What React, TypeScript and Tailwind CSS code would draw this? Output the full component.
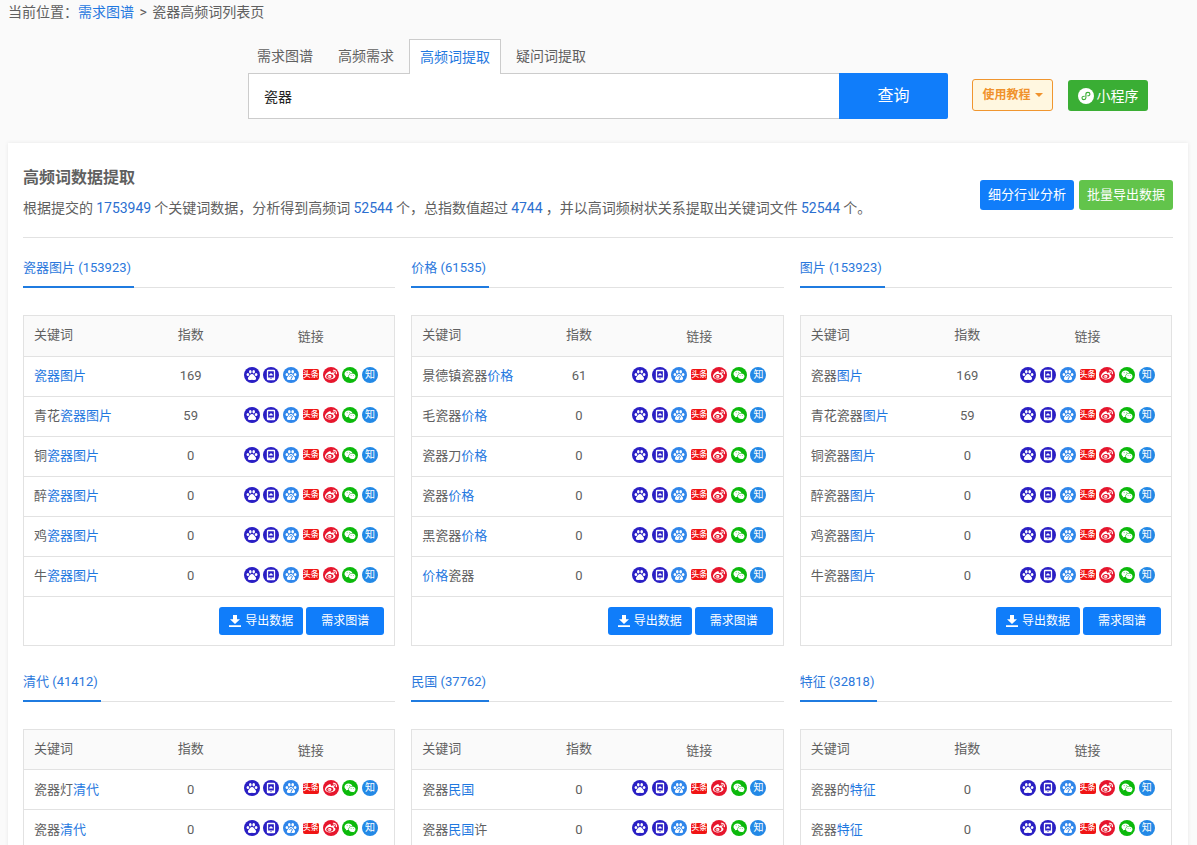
import { FaWeibo } from "react-icons/fa";
import { RiWechatFill } from "react-icons/ri";

type Keyword = { parts: [string, boolean][]; index: number };
type Group = { name: string; count: number; rows: Keyword[]; actions?: boolean };

const parse = (text: string, index: number): Keyword => ({
  parts: text
    .split(/(\[[^\]]+\])/)
    .filter(Boolean)
    .map((p): [string, boolean] => (p.startsWith("[") ? [p.slice(1, -1), true] : [p, false])),
  index,
});

const groups: Group[] = [
  {
    name: "瓷器图片",
    count: 153923,
    actions: true,
    rows: [
      parse("[瓷器图片]", 169),
      parse("青花[瓷器图片]", 59),
      parse("铜[瓷器图片]", 0),
      parse("醉[瓷器图片]", 0),
      parse("鸡[瓷器图片]", 0),
      parse("牛[瓷器图片]", 0),
    ],
  },
  {
    name: "价格",
    count: 61535,
    actions: true,
    rows: [
      parse("景德镇瓷器[价格]", 61),
      parse("毛瓷器[价格]", 0),
      parse("瓷器刀[价格]", 0),
      parse("瓷器[价格]", 0),
      parse("黑瓷器[价格]", 0),
      parse("[价格]瓷器", 0),
    ],
  },
  {
    name: "图片",
    count: 153923,
    actions: true,
    rows: [
      parse("瓷器[图片]", 169),
      parse("青花瓷器[图片]", 59),
      parse("铜瓷器[图片]", 0),
      parse("醉瓷器[图片]", 0),
      parse("鸡瓷器[图片]", 0),
      parse("牛瓷器[图片]", 0),
    ],
  },
  { name: "清代", count: 41412, rows: [parse("瓷器灯[清代]", 0), parse("瓷器[清代]", 0)] },
  { name: "民国", count: 37762, rows: [parse("瓷器[民国]", 0), parse("瓷器[民国]许", 0)] },
  { name: "特征", count: 32818, rows: [parse("瓷器的[特征]", 0), parse("瓷器[特征]", 0)] },
];

const tabs = ["需求图谱", "高频需求", "高频词提取", "疑问词提取"];

function Paw() {
  return (
    <g fill="#fff">
      <ellipse cx="3.9" cy="7.5" rx="1.3" ry="1.6" />
      <ellipse cx="6.3" cy="4.7" rx="1.3" ry="1.7" />
      <ellipse cx="9.7" cy="4.7" rx="1.3" ry="1.7" />
      <ellipse cx="12.1" cy="7.5" rx="1.3" ry="1.6" />
      <path d="M8 7.1c1.7 0 2.200 1.500 3.300 2.600 1.300 1.300 1 3.300-.9 3.400-1 .1-1.600-.3-2.400-.3s-1.400.4-2.400.3c-1.900-.1-2.200-2.100-.9-3.400C5.800 8.600 6.300 7.100 8 7.100z" />
    </g>
  );
}

const iconClass = "inline-block size-4 align-middle";

function LinkIcons() {
  return (
    <>
      <a href="#baidu" aria-label="百度">
        <svg viewBox="0 0 16 16" className={iconClass}>
          <circle cx="8" cy="8" r="8" fill="#2a1fc4" />
          <Paw />
        </svg>
      </a>{" "}
      <a href="#baidu-mobile" aria-label="百度移动">
        <svg viewBox="0 0 16 16" className={iconClass}>
          <circle cx="8" cy="8" r="8" fill="#2a1fc4" />
          <rect x="4.500" y="3.500" width="7" height="9" rx="0.600" fill="none" stroke="#fff" strokeWidth="1.300" />
          <path d="M6.200 8.600c-.2-1 .3-1.500.8-1.700.2-.9 1.800-.9 2 0 .6.200 1 .8.800 1.700z" fill="#fff" />
          <path d="M5 10.500h6v2H5z" fill="#fff" />
          <circle cx="8" cy="11.500" r="0.600" fill="#2a1fc4" />
        </svg>
      </a>{" "}
      <a href="#baidu-zhidao" aria-label="百度知道">
        <svg viewBox="0 0 16 16" className={iconClass}>
          <circle cx="8" cy="8" r="8" fill="#2f86ea" />
          <Paw />
          <path d="M6.600 9.900c.1-1.800 2.900-1.600 2.800 0 0 1-1.300 1-1.300 2.100M8.100 12.400v1" stroke="#2f86ea" strokeWidth="1" fill="none" />
        </svg>
      </a>{" "}
      <a href="#toutiao" aria-label="头条">
        <span className="inline-flex h-[11px] w-4 items-center justify-center rounded-[2px] bg-[#f01414] align-middle text-[8px] leading-none font-medium text-white">
          头条
        </span>
      </a>{" "}
      <a href="#weibo" aria-label="微博">
        <svg viewBox="0 0 16 16" className={iconClass}>
          <circle cx="8" cy="8" r="8" fill="#e6162d" />
          <FaWeibo x="2" y="2" size={12} color="#fff" />
        </svg>
      </a>{" "}
      <a href="#wechat" aria-label="微信">
        <svg viewBox="0 0 16 16" className={iconClass}>
          <circle cx="8" cy="8" r="8" fill="#0bb90b" />
          <RiWechatFill x="2" y="2" size={12} color="#fff" />
        </svg>
      </a>{" "}
      <a href="#zhihu" aria-label="知乎">
        <span className="inline-flex size-4 items-center justify-center rounded-full bg-[#2389e6] align-middle text-[10px] leading-4 text-white">
          知
        </span>
      </a>
    </>
  );
}

function KeywordGroup({ group }: { group: Group }) {
  return (
    <section className="mb-1.5">
      <div className="flex h-[50px] border-b border-[#e2e2e2]">
        <h3 className="-mb-px border-b-2 border-[#1f7be0] pr-[3px] leading-[60px]">
          <a href="#group" className="text-[#2b78dc]">
            {group.name} ({group.count})
          </a>
        </h3>
      </div>
      <div className="mt-[27px] border border-[#e2e2e2]">
        <table className="w-full table-fixed border-collapse">
          <thead>
            <tr className="h-10 bg-[#fafafa]">
              <th className="w-[34%] pb-0.5 pl-2.5 text-left font-normal">关键词</th>
              <th className="w-[22%] pb-0.5 text-center font-normal">指数</th>
              <th className="pt-0.5 pr-1 text-center font-normal">链接</th>
            </tr>
          </thead>
          <tbody>
            {group.rows.map((row, i) => (
              <tr key={i} className="h-10 border-y border-[#e2e2e2]">
                <td className="pl-2.5">
                  {row.parts.map(([text, hit], j) =>
                    hit ? (
                      <a key={j} href="#keyword" className="text-[#1f78e0]">
                        {text}
                      </a>
                    ) : (
                      <span key={j}>{text}</span>
                    ),
                  )}
                </td>
                <td className="text-center">{row.index}</td>
                <td className="pr-1 pb-1 text-center text-[15px] whitespace-nowrap">
                  <LinkIcons />
                </td>
              </tr>
            ))}
          </tbody>
        </table>
        {group.actions && (
          <div className="flex h-12 items-center justify-end gap-[3px] pr-2.5 text-xs text-white">
            <button type="button" className="flex h-7 w-[84px] items-center justify-center gap-1 rounded-[3px] bg-[#107dfa]">
              <svg viewBox="0 0 12 12" className="size-3">
                <path d="M4 0h4v4.300h3L6 9 1 4.300h3zM0 10.300h12V12H0z" fill="#fff" />
              </svg>
              导出数据
            </button>
            <button type="button" className="h-7 w-[78px] rounded-[3px] bg-[#107dfa]">
              需求图谱
            </button>
          </div>
        )}
      </div>
    </section>
  );
}

function Num({ children }: { children: string }) {
  return <span className="font-[Roboto,sans-serif] text-[#2b6fd0]">{children}</span>;
}

export default function App() {
  return (
    <div className="h-screen overflow-hidden bg-[#fafafa] font-[Roboto,'Noto_Sans_CJK_SC',sans-serif] text-[13px] text-[#606060]">
      <nav aria-label="当前位置" className="px-2 text-sm leading-6">
        当前位置：
        <a href="#home" className="text-[#1f78e0]">
          需求图谱
        </a>{" "}
        <span className="mx-0.5">&gt;</span> 瓷器高频词列表页
      </nav>

      <header className="flex items-start pt-[15px] pl-[248px]">
        <div className="w-[700px]">
          <div className="flex h-[34px] gap-[5px] text-sm">
            {tabs.map((tab) => (
              <a
                key={tab}
                href="#tab"
                className={
                  tab === "高频词提取"
                    ? "z-10 -mb-px border border-b-0 border-[#ccc] bg-white px-2.5 leading-[34px] text-[#1f78e0]"
                    : "px-2.5 leading-[34px] first:pl-[9px]"
                }
              >
                {tab}
              </a>
            ))}
          </div>
          <form className="flex" onSubmit={(e) => e.preventDefault()}>
            <input
              aria-label="关键词"
              defaultValue="瓷器"
              className="h-[46px] min-w-0 flex-1 border border-r-0 border-[#ccc] bg-white px-[15px] text-sm text-[#222] outline-none"
            />
            <button type="submit" className="h-[46px] w-[109px] rounded-r-[2px] bg-[#107dfa] text-base text-white">
              查询
            </button>
          </form>
        </div>
        <button
          type="button"
          className="mt-10 ml-6 flex h-8 w-[81px] items-center justify-center gap-1 rounded-[3px] border border-[#f0962f] bg-[#fff7e0] text-xs font-bold text-[#f0922c]"
        >
          使用教程
          <svg viewBox="0 0 8 4" className="h-1 w-2">
            <path d="M0 0h8L4 4z" fill="currentColor" />
          </svg>
        </button>
        <button
          type="button"
          className="mt-[41px] ml-[15px] flex h-[31px] w-20 items-center justify-center gap-[3px] rounded-[3px] bg-[#3aae34] text-sm text-white"
        >
          <svg viewBox="0 0 16 16" className="size-4">
            <circle cx="8" cy="8" r="8" fill="#fff" />
            <path
              d="M6.300 8.200c-1.300-.1-2.300.6-2.300 1.700 0 1 .8 1.700 1.900 1.700 1.200 0 2-.8 2-1.800V6.200c0-1 .9-1.800 2.100-1.800 1.100 0 1.900.7 1.900 1.700 0 1.100-.9 1.800-2.100 1.700"
              fill="none"
              stroke="#3aae34"
              strokeWidth="1.100"
              strokeLinecap="round"
            />
          </svg>
          小程序
        </button>
      </header>

      <main className="mt-6 mr-[9px] ml-2 bg-white px-[15px] shadow-[0_0_4px_rgba(0,0,0,0.08)]">
        <div className="flex items-start justify-between border-b border-[#e2e2e2] pt-[23px] pb-[18px]">
          <div>
            <h1 className="text-base leading-6 font-bold">高频词数据提取</h1>
            <p className="mt-1.5 font-['Noto_Sans_CJK_SC',sans-serif] text-sm leading-[22px]">
              根据提交的 <Num>1753949</Num> 个关键词数据，分析得到高频词 <Num>52544</Num> 个，总指数值超过 <Num>4744</Num> ，并以高词频树状关系提取出关键词文件 <Num>52544</Num> 个。
            </p>
          </div>
          <div className="mt-3.5 flex gap-[5px] text-white">
            <button type="button" className="h-[30px] w-[94px] rounded-[3px] bg-[#107dfa]">
              细分行业分析
            </button>
            <button type="button" className="h-[30px] w-[94px] rounded-[3px] bg-[#62c44b]">
              批量导出数据
            </button>
          </div>
        </div>
        <div className="grid grid-cols-3 gap-x-4 pr-px">
          {groups.map((group) => (
            <KeywordGroup key={group.name} group={group} />
          ))}
        </div>
      </main>
    </div>
  );
}
